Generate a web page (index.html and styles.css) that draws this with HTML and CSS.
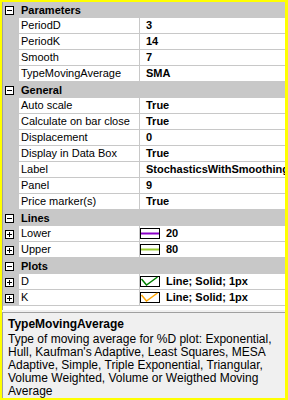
FILE: index.html
```html
<!DOCTYPE html>
<html>

<head>
    <title>Properties</title>
    <meta charset="UTF-8" />
    <link rel="stylesheet" href="styles.css">
</head>

<body>
    <div class="frame">
        <div class="grid">
            <div class="category">
                <span class="margin"><svg class="box" width="9" height="9"><rect x="0.5" y="0.5" width="8" height="8" fill="#fff" stroke="#000"/><path d="M2 4.5h5" stroke="#000"/></svg></span>
                <span class="cat-name">Parameters</span>
            </div>
            <div class="row"><span class="margin"></span><span class="label">PeriodD</span><span class="value">3</span></div>
            <div class="row"><span class="margin"></span><span class="label">PeriodK</span><span class="value">14</span></div>
            <div class="row"><span class="margin"></span><span class="label">Smooth</span><span class="value">7</span></div>
            <div class="row"><span class="margin"></span><span class="label">TypeMovingAverage</span><span class="value">SMA</span></div>

            <div class="category">
                <span class="margin"><svg class="box" width="9" height="9"><rect x="0.5" y="0.5" width="8" height="8" fill="#fff" stroke="#000"/><path d="M2 4.5h5" stroke="#000"/></svg></span>
                <span class="cat-name">General</span>
            </div>
            <div class="row"><span class="margin"></span><span class="label">Auto scale</span><span class="value">True</span></div>
            <div class="row"><span class="margin"></span><span class="label">Calculate on bar close</span><span class="value">True</span></div>
            <div class="row"><span class="margin"></span><span class="label">Displacement</span><span class="value">0</span></div>
            <div class="row"><span class="margin"></span><span class="label">Display in Data Box</span><span class="value">True</span></div>
            <div class="row"><span class="margin"></span><span class="label">Label</span><span class="value">StochasticsWithSmoothing</span></div>
            <div class="row"><span class="margin"></span><span class="label">Panel</span><span class="value">9</span></div>
            <div class="row"><span class="margin"></span><span class="label">Price marker(s)</span><span class="value">True</span></div>

            <div class="category">
                <span class="margin"><svg class="box" width="9" height="9"><rect x="0.5" y="0.5" width="8" height="8" fill="#fff" stroke="#000"/><path d="M2 4.5h5" stroke="#000"/></svg></span>
                <span class="cat-name">Lines</span>
            </div>
            <div class="row">
                <span class="margin"><svg class="box" width="9" height="9"><rect x="0.5" y="0.5" width="8" height="8" fill="#fff" stroke="#000"/><path d="M2 4.5h5M4.5 2v5" stroke="#000"/></svg></span>
                <span class="label">Lower</span>
                <span class="value"><svg class="swatch" width="20" height="11"><rect x="0.5" y="0.5" width="19" height="10" fill="#fff" stroke="#000"/><path d="M1 5.5h18" stroke="#8a00c8" stroke-width="2"/></svg>20</span>
            </div>
            <div class="row">
                <span class="margin"><svg class="box" width="9" height="9"><rect x="0.5" y="0.5" width="8" height="8" fill="#fff" stroke="#000"/><path d="M2 4.5h5M4.5 2v5" stroke="#000"/></svg></span>
                <span class="label">Upper</span>
                <span class="value"><svg class="swatch" width="20" height="11"><rect x="0.5" y="0.5" width="19" height="10" fill="#fff" stroke="#000"/><path d="M1 5.5h18" stroke="#9acd32" stroke-width="2"/></svg>80</span>
            </div>

            <div class="category">
                <span class="margin"><svg class="box" width="9" height="9"><rect x="0.5" y="0.5" width="8" height="8" fill="#fff" stroke="#000"/><path d="M2 4.5h5" stroke="#000"/></svg></span>
                <span class="cat-name">Plots</span>
            </div>
            <div class="row">
                <span class="margin"><svg class="box" width="9" height="9"><rect x="0.5" y="0.5" width="8" height="8" fill="#fff" stroke="#000"/><path d="M2 4.5h5M4.5 2v5" stroke="#000"/></svg></span>
                <span class="label">D</span>
                <span class="value"><svg class="swatch" width="20" height="11"><rect x="0.5" y="0.5" width="19" height="10" fill="#fff" stroke="#000"/><path d="M1.5 3l5 6 11-8" fill="none" stroke="#008000" stroke-width="1.5"/></svg>Line; Solid; 1px</span>
            </div>
            <div class="row">
                <span class="margin"><svg class="box" width="9" height="9"><rect x="0.5" y="0.5" width="8" height="8" fill="#fff" stroke="#000"/><path d="M2 4.5h5M4.5 2v5" stroke="#000"/></svg></span>
                <span class="label">K</span>
                <span class="value"><svg class="swatch" width="20" height="11"><rect x="0.5" y="0.5" width="19" height="10" fill="#fff" stroke="#000"/><path d="M1.5 3l5 6 11-8" fill="none" stroke="#ffa500" stroke-width="1.5"/></svg>Line; Solid; 1px</span>
            </div>
        </div>

        <div class="help">
            <div class="help-title">TypeMovingAverage</div>
            <div class="help-text">Type of moving average for %D plot: Exponential, Hull, Kaufman's Adaptive, Least Squares, MESA Adaptive, Simple, Triple Exponential, Triangular, Volume Weighted, Volume or Weigthed Moving Average</div>
        </div>
    </div>
</body>

</html>
```

FILE: styles.css
```css
body {
    margin: 0;
    padding: 0;
    background-color: #ffff00;
    font-family: "Liberation Sans", Arial, sans-serif;
}

.frame {
    width: 283px;
    height: 396px;
    margin: 2px 3px 2px 2px;
    display: flex;
    flex-direction: column;
    background-color: #f0f0f0;
}

.grid {
    height: 308px;
    background-color: #fff;
    border-left: 1px solid #a0a0a0;
    overflow: hidden;
}

.row,
.category {
    display: flex;
    height: 16px;
    font-size: 11px;
    line-height: 15px;
    color: #000;
}

.margin {
    width: 16px;
    flex-shrink: 0;
    background-color: #c8c8c8;
    display: flex;
    align-items: center;
    padding-left: 2px;
    box-sizing: border-box;
}

.category {
    background-color: #c8c8c8;
}

.cat-name {
    font-weight: bold;
    padding-left: 2px;
    line-height: 16px;
}

.label {
    width: 118px;
    flex-shrink: 0;
    padding-left: 2px;
    border-bottom: 1px solid #c8c8c8;
    border-right: 1px solid #c8c8c8;
    white-space: nowrap;
    overflow: hidden;
}

.value {
    flex: 1;
    padding-left: 6px;
    font-weight: bold;
    border-bottom: 1px solid #c8c8c8;
    white-space: nowrap;
    overflow: hidden;
    display: flex;
    align-items: center;
}

.swatch {
    margin-left: -6px;
    margin-right: 6px;
    flex-shrink: 0;
}

.help {
    flex: 1;
    margin-top: 2px;
    border-top: 1px solid #a0a0a0;
    border-left: 1px solid #a0a0a0;
    padding: 4px 4px 0 5px;
    background-color: #f0f0f0;
    font-size: 12px;
    overflow: hidden;
}

.help-title {
    font-weight: bold;
    line-height: 15px;
    margin-bottom: 1px;
}

.help-text {
    line-height: 13px;
}
```
